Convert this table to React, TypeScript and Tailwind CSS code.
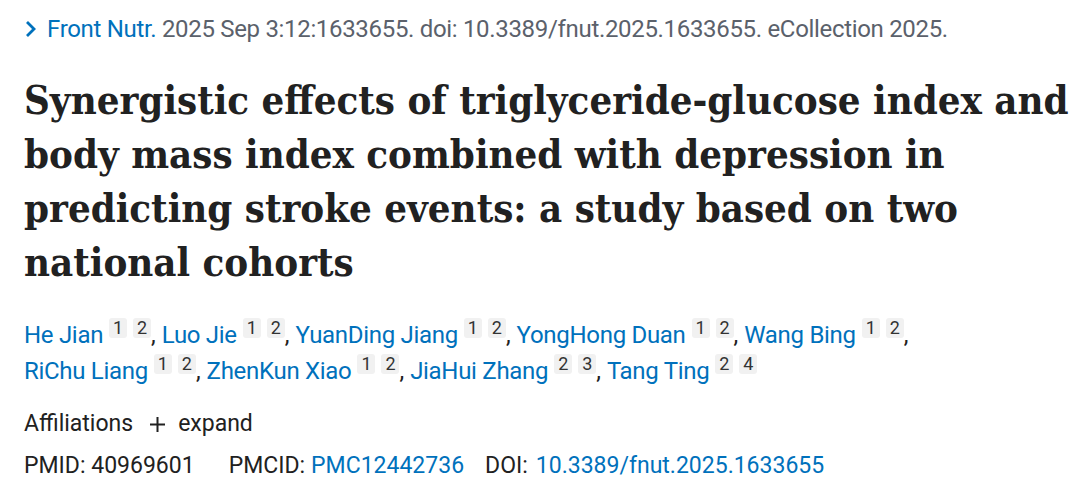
import React from "react";

const sans = { fontFamily: 'Roboto, "Open Sans", sans-serif' };

function Sup({ n }: { n: string }) {
  return (
    <span className="ml-[6px] inline-block h-[20px] w-[18px] rounded-[3px] bg-[#f1f1f1] text-center align-[9px] text-[18px] leading-[20px] tracking-normal text-[#333333]">
      {n}
    </span>
  );
}

function Author({ name, sups, last }: { name: string; sups: string[]; last?: boolean }) {
  return (
    <span className="whitespace-nowrap">
      <span className="tracking-[-0.3px] text-[#0071bc]">{name}</span>
      {sups.map((s, i) => (
        <Sup key={i} n={s} />
      ))}
      {!last && <span className="text-[#212121]">, </span>}
    </span>
  );
}

export default function App() {
  const authors1 = [
    ["He Jian", ["1", "2"]],
    ["Luo Jie", ["1", "2"]],
    ["YuanDing Jiang", ["1", "2"]],
    ["YongHong Duan", ["1", "2"]],
    ["Wang Bing", ["1", "2"]],
  ] as [string, string[]][];
  const authors2 = [
    ["RiChu Liang", ["1", "2"]],
    ["ZhenKun Xiao", ["1", "2"]],
    ["JiaHui Zhang", ["2", "3"]],
    ["Tang Ting", ["2", "4"]],
  ] as [string, string[]][];
  return (
    <div className="h-[492px] w-[1080px] overflow-hidden bg-white pl-6 pt-[15px]" style={sans}>
      <div className="flex items-center text-[24px] leading-[28px] tracking-[-0.32px] text-[#5b616b]">
        <svg width="12" height="18" viewBox="0 0 12 18" className="ml-[1px] mr-[10px]">
          <path d="M2 2 L9 9 L2 16" fill="none" stroke="#0071bc" strokeWidth="2.8" />
        </svg>
        <span className="text-[#0071bc]">Front Nutr.</span>
        <span>&nbsp;2025 Sep 3:12:1633655. doi: 10.3389/fnut.2025.1633655. eCollection 2025.</span>
      </div>
      <h1
        className="mt-[30px] whitespace-nowrap text-[39.8px] font-bold leading-[54px] text-[#212121]"
        style={{ fontFamily: '"DejaVu Serif Condensed", "DejaVu Serif", serif', fontStretch: "condensed" }}
      >
        Synergistic effects of triglyceride-glucose index and
        <br />
        body mass index combined with depression in
        <br />
        predicting stroke events: a study based on two
        <br />
        national cohorts
      </h1>
      <div className="mt-[28px] text-[24px] leading-[36px]">
        <div>
          {authors1.map(([n, s]) => (
            <Author key={n} name={n} sups={s} />
          ))}
        </div>
        <div>
          {authors2.map(([n, s], i) => (
            <Author key={n} name={n} sups={s} last={i === authors2.length - 1} />
          ))}
        </div>
      </div>
      <div className="mt-[21px] flex items-center text-[23px] leading-[28px] text-[#212121]">
        <span>Affiliations</span>
        <svg width="15" height="15" viewBox="0 0 15 15" className="ml-[17px] mr-[13px]">
          <path d="M7.5 0 V15 M0 7.5 H15" stroke="#212121" strokeWidth="2" />
        </svg>
        <span>expand</span>
      </div>
      <div className="mt-[14px] flex items-baseline text-[23px] leading-[28px] text-[#212121]">
        <span>PMID: 40969601</span>
        <span className="ml-[34px]">PMCID:</span>
        <span className="ml-[6px] text-[#0071bc]">PMC12442736</span>
        <span className="ml-[21px]">DOI:</span>
        <span className="ml-[8px] text-[#0071bc]">10.3389/fnut.2025.1633655</span>
      </div>
    </div>
  );
}
